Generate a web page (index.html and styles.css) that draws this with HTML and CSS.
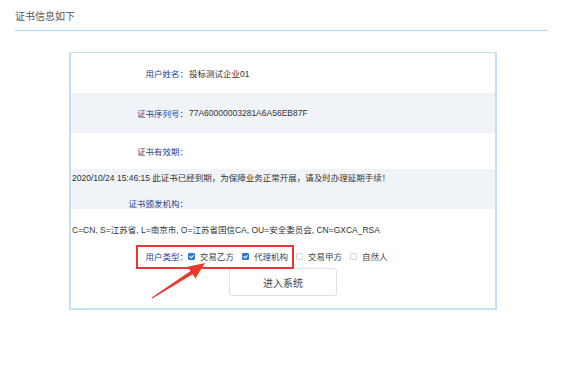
FILE: index.html
```html
<!DOCTYPE html>
<html lang="zh-CN">
<head>
    <meta charset="UTF-8">
    <title>证书信息</title>
    <link rel="stylesheet" href="styles.css">
</head>
<body>
    <!-- Title -->
    <div class="page-title">证书信息如下</div>

    <!-- Certificate box -->
    <div class="cert-box">
        <div class="row">
            <span class="label">用户姓名：</span>
            <span class="value">投标测试企业01</span>
        </div>
        <div class="row alt">
            <span class="label">证书序列号：</span>
            <span class="value">77A60000003281A6A56EB87F</span>
        </div>
        <div class="row short">
            <span class="label">证书有效期：</span>
        </div>
        <div class="block alt">
            <p class="full">2020/10/24 15:46:15 此证书已经到期，为保障业务正常开展，请及时办理延期手续！</p>
            <div class="label-line"><span class="label">证书颁发机构：</span></div>
        </div>
        <div class="block last">
            <p class="full">C=CN, S=江苏省, L=南京市, O=江苏省国信CA, OU=安全委员会, CN=GXCA_RSA</p>
            <div class="type-row">
                <span class="label">用户类型：</span>
                <label class="opt"><span class="cb checked"></span>交易乙方</label>
                <label class="opt"><span class="cb checked"></span>代理机构</label>
                <label class="opt"><span class="cb"></span>交易甲方</label>
                <label class="opt"><span class="cb"></span>自然人</label>
            </div>
            <div class="actions">
                <button class="btn-enter">进入系统</button>
            </div>
        </div>
    </div>

    <!-- Annotation -->
    <div class="mark-box"></div>
    <svg class="mark-arrow" width="64" height="44" viewBox="0 0 64 44">
        <polygon points="1.7,39.6 40.5,12.9 37.8,8.7 55,5 45.4,20.5 42.7,16.3 2.3,40.4" fill="#e8392b"/>
    </svg>
</body>
</html>
```

FILE: styles.css
```css
/* General Reset */
* {
    margin: 0;
    padding: 0;
    box-sizing: border-box;
}

body {
    font-family: "Liberation Sans", "Noto Sans CJK SC", sans-serif;
    font-size: 8.5px;
    color: #333;
    background-color: #fff;
    width: 576px;
    height: 369px;
    position: relative;
}

/* Title */
.page-title {
    margin: 0 28px 0 15px;
    padding-top: 8px;
    height: 31px;
    font-size: 10px;
    color: #555;
    border-bottom: 1px solid #a9d6f0;
}

/* Box */
.cert-box {
    margin: 21px 0 0 69px;
    width: 428px;
    height: 258px;
    border: 2px solid #c3e1f3;
    border-top-width: 1px;
}

.row {
    display: flex;
    align-items: center;
    height: 40px;
}

.row.short {
    height: 36px;
}

.alt {
    background-color: #f0f4f8;
}

.label {
    display: inline-block;
    width: 117px;
    text-align: right;
    color: #233f8f;
    flex-shrink: 0;
}

.value {
    padding-left: 1px;
}

.block {
    padding-top: 3px;
}

.block.alt {
    height: 40px;
}

.full {
    line-height: 12px;
    padding-left: 1px;
}

.label-line {
    margin-top: 14px;
    line-height: 12px;
}

.block.last {
    padding-top: 15px;
}

/* User type */
.type-row {
    display: flex;
    align-items: center;
    margin-top: 14px;
    height: 12px;
}

.opt {
    display: flex;
    align-items: center;
    margin-left: 0;
    margin-right: 3px;
    color: #444;
}

.opt + .opt {
    margin-left: 5px;
}

.cb {
    width: 7px;
    height: 7px;
    border: 1px solid #d8d8d8;
    border-radius: 1px;
    margin-right: 5px;
    position: relative;
}

.cb.checked {
    background-color: #2f7ad8;
    border-color: #2f7ad8;
}

.cb.checked::after {
    content: "";
    position: absolute;
    left: 1px;
    top: 0;
    width: 2px;
    height: 3px;
    border: solid #fff;
    border-width: 0 1px 1px 0;
    transform: rotate(45deg);
}

.actions {
    display: flex;
    justify-content: center;
    margin-top: 6px;
}

.btn-enter {
    width: 108px;
    height: 28px;
    font-family: inherit;
    font-size: 10px;
    color: #444;
    background-color: #fff;
    border: 1px solid #e0e0e0;
    border-radius: 3px;
}

/* Annotation overlay */
.mark-box {
    position: absolute;
    left: 136px;
    top: 245px;
    width: 158px;
    height: 24px;
    border: 2px solid #e53935;
}

.mark-arrow {
    position: absolute;
    left: 150px;
    top: 258px;
}
```
